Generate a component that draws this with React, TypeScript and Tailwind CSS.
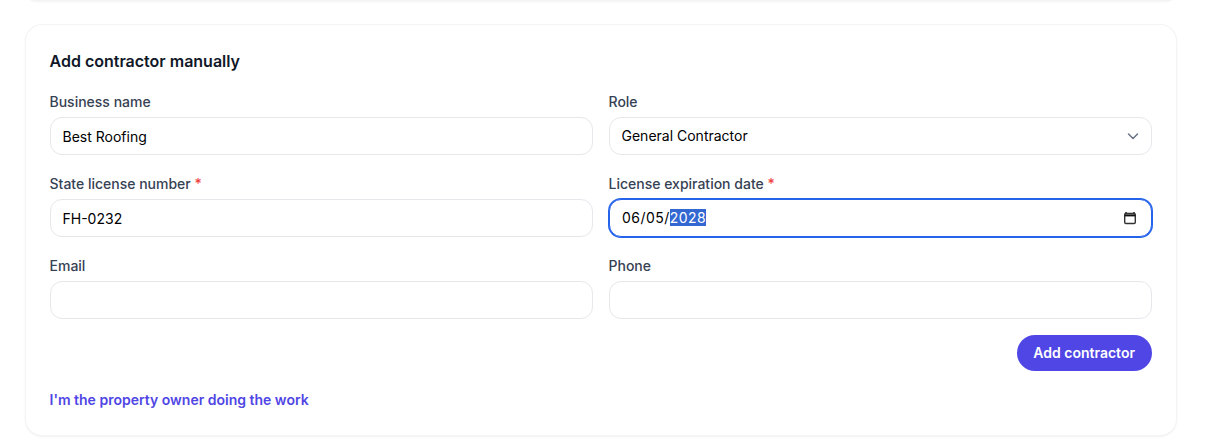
const inputClass =
  "h-[38px] w-full rounded-xl border border-gray-200 bg-white px-3 text-sm text-black outline-none";

function Field({ label, required, children }: { label: string; required?: boolean; children: React.ReactNode }) {
  return (
    <div className="flex flex-col gap-[5px]">
      <label className="h-5 text-sm leading-5 font-medium text-gray-700">
        {label}
        {required && <span className="text-[#ef4444]"> *</span>}
      </label>
      {children}
    </div>
  );
}

export default function App() {
  return (
    <div className="h-[439px] overflow-hidden bg-white pr-[30.5px] pl-[25.5px] font-['Inter',sans-serif]">
      {/* Bottom edge of the card above */}
      <div className="-mt-5 mb-[25px] h-5 rounded-2xl bg-white shadow-sm ring-1 ring-gray-100" />

      <div className="h-[410px] rounded-2xl bg-white px-6 pt-6 shadow-sm ring-1 ring-gray-100">
        <h2 className="mb-[19px] text-base font-semibold text-gray-900">Add contractor manually</h2>

        <div className="grid grid-cols-2 gap-x-4 gap-y-[19px]">
          <Field label="Business name">
            <input className={inputClass} defaultValue="Best Roofing" />
          </Field>
          <Field label="Role">
            <div className="relative">
              <select className={`${inputClass} appearance-none`} defaultValue="General Contractor">
                <option>General Contractor</option>
              </select>
              <svg
                className="pointer-events-none absolute top-[9px] right-[9px] h-5 w-5 text-gray-500"
                viewBox="0 0 20 20"
                fill="none"
                stroke="currentColor"
                strokeWidth="1.5"
                strokeLinecap="round"
                strokeLinejoin="round"
              >
                <path d="M5.5 8l4.5 4.5L14.5 8" />
              </svg>
            </div>
          </Field>
          <Field label="State license number" required>
            <input className={inputClass} defaultValue="FH-0232" />
          </Field>
          <Field label="License expiration date" required>
            <div className="flex h-[38px] w-full items-center justify-between rounded-xl border border-[#2563eb] bg-white pr-[14px] pl-[12.5px] text-sm text-black ring-1 ring-[#2563eb]">
              <span className="tracking-[0.45px]">
                06/05/<span className="bg-[#3367d1] text-white">2028</span>
              </span>
              <svg className="h-[14px] w-[14px]" viewBox="0 0 14 14" fill="none">
                <path d="M3 1v2M11 1v2" stroke="#111" strokeWidth="1.4" />
                <rect x="1.7" y="2.5" width="10.6" height="10" rx="1.2" stroke="#333" strokeWidth="1.4" />
                <path d="M1.7 4.4h10.6" stroke="#111" strokeWidth="2" />
              </svg>
            </div>
          </Field>
          <Field label="Email">
            <input className={inputClass} />
          </Field>
          <Field label="Phone">
            <input className={inputClass} />
          </Field>
        </div>

        <div className="mt-4 flex justify-end">
          <button className="h-9 rounded-full bg-[#4f46e5] px-[16.5px] text-sm font-semibold text-white">Add contractor</button>
        </div>

        <div className="mt-4">
          <button className="text-sm font-semibold text-[#4f46e5]">I'm the property owner doing the work</button>
        </div>
      </div>
    </div>
  );
}
